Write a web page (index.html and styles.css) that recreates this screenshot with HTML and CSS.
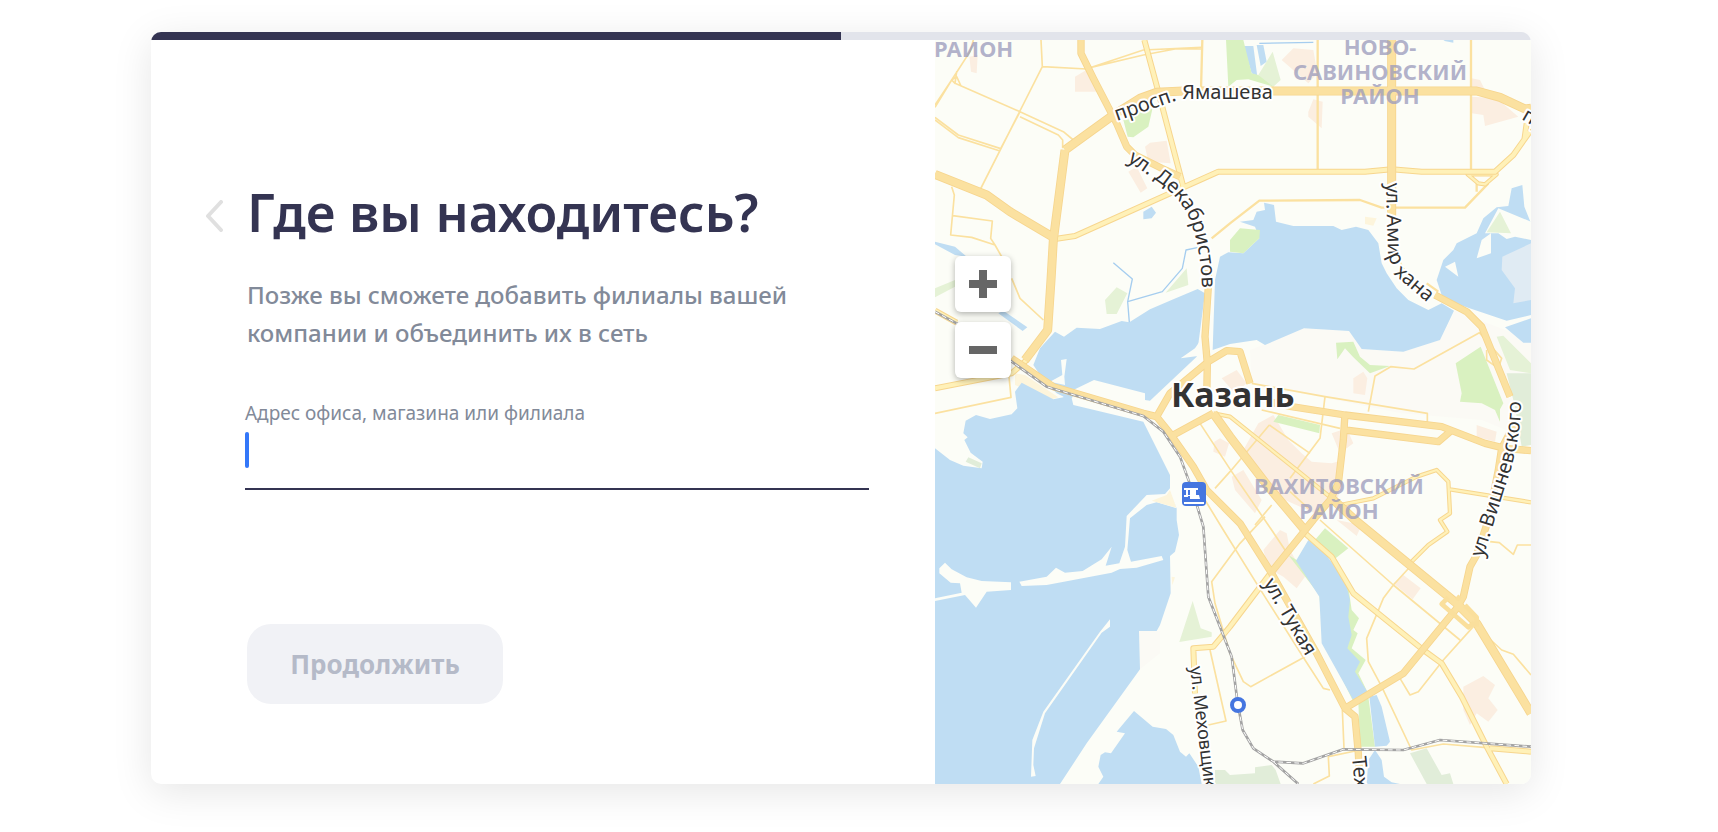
FILE: index.html
```
<!DOCTYPE html>
<html lang="ru">
<head>
    <meta charset="UTF-8">
    <meta name="viewport" content="width=device-width, initial-scale=1.0">
    <title>Где вы находитесь?</title>
    <link rel="stylesheet" href="styles.css">
</head>
<body>
    <main class="card">
        <div class="progress">
            <div class="progress-bar" style="width: 50%"></div>
        </div>
        <div class="content">
            <form class="form">
                <div class="header">
                    <button class="back" type="button" aria-label="Назад">
                        <svg width="18" height="32" viewBox="0 0 18 32"><path d="M16 2 L3 16 L16 30"/></svg>
                    </button>
                    <h1>Где вы находитесь?</h1>
                </div>
                <p class="hint">Позже вы сможете добавить филиалы вашей компании и объединить их в сеть</p>
                <div class="field">
                    <label for="address">Адрес офиса, магазина или филиала</label>
                    <div class="input-row">
                        <input type="text" id="address" name="address" autocomplete="off">
                        <span class="caret"></span>
                    </div>
                </div>
                <button class="submit" type="submit" disabled>Продолжить</button>
            </form>

            <div class="map">
                <svg class="map-canvas" viewBox="0 0 596 744" preserveAspectRatio="xMidYMid slice">
                    <defs>
                        <path id="roads-wide" d="M390 330 L535 225 L615 175 L665 157 L745 153 H1625 L1695 172 L1770 207 L1788 205 M390 330 L355 600 L348 720 L338 870 L270 960 M0 403 L155 465 L225 515 L355 592 M1370 0 V530 M835 1120 L885 1190 L1000 1340 L1105 1465 M1185 1370 L1260 1440 L1565 1690 L1625 1750 L1788 2020"/>
                        <path id="roads-main" d="M438 0 V40 L475 115 L545 250 L575 320 L600 345 L680 385 L735 410 M820 690 V740 L810 890 L817 970 L815 1080 M230 955 L355 1040 L625 1120 L665 1130 L705 1180 L775 1280 L815 1350 L915 1450 L1010 1600 L1145 1840 L1230 2005 L1260 2030 L1270 2140 L1275 2232 M665 1130 L705 1060 L820 965 L875 932 L915 935 L945 1030 M1000 1085 L1070 1100 L1230 1125 L1520 1160 L1650 1210 L1710 1225 L1788 1232 M715 1185 L835 1120 M1135 1440 L1010 1595 M1230 1120 L1225 1200 L1210 1330 L1185 1380 L1105 1475 M1230 2005 L1405 1900 L1565 1705 L1585 1670 L1605 1580 L1625 1545 L1660 1440 L1690 1290 L1700 1225 L1740 1150 M1500 765 L1595 815 L1640 860 L1725 1070 M1230 1170 L1510 1205 L1545 1175"/>
                        <path id="roads-yellow" d="M628 0 L670 155 L745 440 M360 597 L420 588 L850 395 H1290 L1370 388 L1460 395 H1680 L1735 345 L1788 270 M1775 250 L1768 300 M0 1045 L230 1000 L275 960 M0 812 L65 848 M1105 1475 L1190 1550 L1255 1660 L1465 1830 L1520 1870 L1580 1970 L1655 2120 L1715 2232 M1010 1595 L885 1760 L835 1820 L775 1825 L780 1960 M1665 2125 L1788 2135"/>
                        <path id="roads-small" d="M835 1120 L885 1130 L1085 1290 L1215 1395 L1315 1375 L1445 1310 L1505 1290 L1540 1325 L1545 1420 L1515 1440 L1537 1475 L1480 1515 L1425 1570 M1545 1348 L1788 1387 M1598 403 H1685 L1650 433 L1630 430 Z"/>
                        <path id="rails" d="M0 815 L65 850 L230 965 L335 1040 L625 1128 L685 1175 L735 1250 L775 1360 L805 1460 L820 1670 L890 1850 L908 1990 L923 2070 L955 2125 L1015 2165 L1105 2170 L1225 2128 L1405 2130 L1515 2100 L1788 2120 M1015 2165 L1090 2232"/>

                        <path id="way-yamasheva" d="M182 81 L237 62 Q244 59 252 59 H360"/>
                        <path id="way-dekabristov" d="M192 121 L222 141 Q246 158 255 180 Q268 215 267 260"/>
                        <path id="way-amirkhana" d="M451 143 L453 216 L459 229 M461 236 L508 276"/>
                        <path id="way-vishnevskogo" d="M548 518 L569 450 Q593 385 583 330"/>
                        <path id="way-tukaya" d="M328 543 L384 639"/>
                        <path id="way-mehovshikov" d="M255 627 L275 794"/>
                        <path id="way-teh" d="M417 717 L424 790"/>
                        <path id="way-edge" d="M586 79 L640 110"/>
                    </defs>

                    <!-- ground, water and roads use a three times finer grid -->
                    <svg width="596" height="744" viewBox="0 0 1788 2232">
                        <rect class="land" width="1788" height="2232"/>

                        <g class="district">
                            <path d="M945 930 L1107 865 L1242 873 L1280 927 L1405 935 L1515 900 L1560 812 L1788 900 V1200 L1640 1140 L1400 1120 L950 1030 Z"/>
                            <path d="M612 1773 H675 V1840 L615 1888 Z"/>
                        </g>

                        <g class="urban">
                            <path d="M420 110 L470 80 L500 155 H420 Z M630 320 L645 308 L695 302 L707 370 L640 365 Z M580 395 L605 380 L637 445 L617 458 Z M103 50 L128 45 L125 100 L108 95 Z"/>
                            <path d="M1040 60 L1075 25 L1135 30 L1147 100 L1120 130 Z M1610 115 L1635 120 L1650 150 L1610 150 Z M1610 170 L1685 175 L1750 230 L1650 258 L1645 225 L1610 220 Z M1120 215 L1135 178 L1163 185 L1160 265 L1120 230 Z"/>
                            <path d="M1255 1015 L1285 995 L1297 1015 L1290 1065 L1255 1060 Z M1625 1155 L1685 1175 L1680 1205 L1625 1190 Z M860 1015 L905 990 L935 1030 L900 1060 Z"/>
                            <path d="M925 1230 L970 1150 L1015 1125 L1060 1200 L1100 1240 L1130 1265 L1190 1270 L1225 1260 L1210 1370 L1140 1420 L1050 1380 L960 1290 Z M1190 1180 L1235 1165 L1255 1210 L1215 1240 Z M838 1205 L855 1195 L882 1210 L870 1250 L835 1235 Z M890 1310 L925 1290 L980 1380 L960 1420 L900 1350 Z"/>
                            <path d="M985 1530 L1035 1470 L1055 1480 L1065 1530 L1110 1610 L1085 1645 L1045 1610 L1000 1585 Z M1375 1630 L1405 1605 L1457 1645 L1433 1678 Z M1205 1440 L1280 1455 L1265 1488 Z"/>
                            <path d="M1585 1940 L1645 1908 L1680 1935 L1660 1975 L1688 2010 L1660 2045 L1625 2020 L1605 2055 L1585 2010 Z"/>
                        </g>
                        <path class="sand" d="M240 1000 L270 1005 L370 1072 L350 1078 L240 1035 Z M1290 530 L1325 535 L1315 557 L1290 552 Z"/>

                        <g class="water">
                            <!-- upper lake -->
                            <path d="M295 975 L315 925 L360 875 L387 890 L425 863 L495 867 L560 843 L583 847 L645 808 L715 778 L788 747 L810 760 L785 950 L645 1082 L630 1080 V1060 L477 1020 L415 1050 L405 1080 L365 1060 L325 1020 Z"/>
                            <path d="M840 720 L855 650 L880 637 L925 640 L973 595 L960 560 L915 545 L955 540 L965 515 L990 510 L987 488 L1017 495 L1023 545 L1075 558 H1195 L1220 570 L1263 560 L1300 570 L1330 610 L1340 670 L1355 700 L1385 745 L1420 780 L1480 810 L1520 790 L1557 812 L1515 900 L1405 935 L1280 927 L1242 873 L1107 865 L990 915 L965 900 L885 912 L833 930 Z"/>
                            <!-- east -->
                            <path d="M1505 720 L1525 660 L1555 630 L1565 610 L1625 580 L1645 535 L1685 502 L1720 498 L1730 445 L1762 435 L1768 500 L1788 550 V825 L1715 842 L1575 795 L1520 765 Z M1710 862 L1788 835 V908 H1765 Z"/>
                            <!-- big lake -->
                            <path d="M0 1225 L45 1260 L85 1277 L140 1285 L143 1265 L107 1238 L88 1200 L98 1192 L85 1180 L92 1142 L123 1125 L165 1137 L230 1123 L247 1105 L240 1055 L260 1028 L355 1078 L385 1072 L395 1040 L420 1060 L410 1075 L415 1095 L625 1145 L705 1305 V1355 L725 1405 V1440 L732 1485 L720 1535 L705 1548 L707 1660 L675 1755 L665 1773 H612 L615 1888 L455 2110 L375 2232 H0 Z"/>
                            <path d="M490 2232 L505 2210 L490 2180 L497 2145 L510 2137 L528 2140 L570 2080 L545 2075 L597 2013 L653 2060 L693 2067 L715 2085 L735 2135 L753 2150 L763 2140 L790 2180 L800 2232 Z"/>
                            <path d="M925 18 H955 L967 110 L950 100 Z M965 15 H985 L995 65 L977 78 Z M625 515 L650 500 L663 518 L650 535 L625 538 Z M190 820 L205 812 L277 862 L263 873 Z M0 605 L60 620 L95 650 L60 645 L0 613 Z M1525 2 L1530 0 H1555 V8 Z"/>
                        </g>
                        <path class="stream" d="M535 668 L592 717 L578 785 L583 847 M578 785 L682 755 L742 685 L753 630 L790 622 M973 10 L1135 7"/>

                        <g class="land">
                            <path d="M253 1625 L335 1610 L363 1583 L390 1598 L443 1593 L500 1558 L530 1520 L512 1577 L553 1570 L570 1520 L575 1428 L635 1365 L690 1362 L705 1345 L725 1405 L665 1387 L635 1395 L585 1435 L577 1530 L588 1565 L680 1548 L685 1560 L605 1583 L555 1587 L530 1598 L335 1635 L260 1638 Z"/>
                            <path d="M13 1585 L30 1568 L50 1588 L95 1612 L140 1623 L228 1627 V1650 L155 1655 L123 1703 L90 1665 L0 1683 V1675 L80 1658 L75 1630 L47 1628 L13 1600 Z"/>
                            <path d="M525 1738 V1760 L500 1778 L330 2020 L297 2125 L295 2175 L302 2208 L288 2210 L292 2100 L325 2015 L495 1775 Z"/>
                            <path d="M378 960 L395 957 L388 1010 L390 1035 L345 1025 L382 1005 Z M737 955 L780 925 L797 900 L812 945 Z"/>
                            <path d="M1625 655 L1640 600 L1668 580 L1668 640 Z M1530 680 L1560 665 L1570 710 Z M1650 580 L1690 505 L1788 545 V600 L1740 590 L1715 597 L1690 580 Z"/>
                        </g>
                        <path class="wet" d="M1702 650 L1788 610 V780 L1735 790 L1740 745 L1700 690 Z"/>
                        <path class="sand" d="M650 1382 L695 1365 L705 1350 L724 1403 Z M710 1610 L720 1612 L712 1635 Z"/>

                        <g class="park">
                            <path d="M873 0 H925 L950 100 L970 105 L1020 125 L1015 140 L940 118 L905 120 L880 140 Z M885 600 L915 565 L975 570 L973 595 L925 640 L885 635 Z M565 240 L655 195 L640 260 L595 292 L578 290 Z"/>
                            <path d="M1562 970 L1637 920 L1705 1090 L1695 1108 L1695 1145 L1680 1110 L1640 1090 L1575 1085 L1580 1060 Z M1203 908 L1255 905 L1275 950 L1305 975 L1365 978 L1305 1000 L1255 952 L1230 925 L1207 958 Z M1030 1125 L1155 1155 L1153 1180 L1015 1145 Z"/>
                            <path d="M1170 1465 L1240 1525 L1195 1560 L1140 1500 Z M1060 1545 L1153 1665 L1165 1800 L1255 1985 L1297 1955 L1270 1900 L1292 1860 L1250 1825 L1268 1780 L1255 1770 L1272 1735 L1250 1710 L1240 1640 L1170 1640 L1085 1560 Z M1270 1985 L1300 1970 L1320 2120 H1275 Z"/>
                        </g>
                        <g class="grass">
                            <path d="M970 105 L1013 35 L1037 120 L1015 140 Z M510 780 L545 742 L577 760 L545 822 H515 Z M692 758 L755 685 L760 735 Z M0 745 L60 720 V740 L0 772 Z M1655 577 L1695 515 L1728 580 Z M773 1683 L797 1765 L830 1777 V1790 L733 1806 Z M1685 890 L1705 887 L1788 970 V1000 L1725 990 Z"/>
                        </g>
                        <path class="grove" d="M92 1265 L100 1252 L140 1270 L135 1285 Z M840 2190 H870 L885 2205 L960 2200 V2182 L1010 2175 L1022 2190 L1037 2232 H840 Z M1425 2140 L1475 2125 L1520 2205 L1545 2200 L1555 2232 H1475 Z M1715 1000 L1788 1000 V1215 L1760 1220 L1740 1100 Z"/>
                        <g class="water">
                            <path d="M1120 1500 L1083 1562 L1153 1670 L1160 1810 L1255 1980 L1297 1955 L1260 1895 L1275 1865 L1237 1825 L1250 1785 L1240 1730 L1245 1680 L1235 1640 L1200 1580 L1170 1540 Z M1303 1970 L1325 1965 L1340 2000 L1365 2105 L1355 2117 L1320 2120 Z M1320 2130 L1340 2160 L1347 2210 L1370 2227 L1395 2232 H1295 L1300 2160 Z"/>
                        </g>

                        <g class="street">
                            <path d="M115 0 L105 35 L50 120 L0 195 M50 120 L0 202 M318 0 L322 80 L135 450 M322 80 L455 87 M465 83 L625 30 L800 22 M465 83 L625 45 L720 27 H800 M60 130 L255 215 L385 275 L415 300 M255 230 L370 285 L383 300 V325 M255 215 L195 330 M65 95 L60 130 L50 120 L65 110 L78 138 M0 232 L70 285 L195 325 M0 240 L70 293 L195 333"/>
                            <path d="M50 440 L58 465 L47 585 L110 592 L180 615 L200 650 M53 527 L172 543 L167 595 L180 615 M230 715 L255 775 L325 840 M0 1120 L228 1072 L222 1010"/>
                            <path d="M950 1030 L1170 1070 L1477 1120 V1145 M1300 1115 L1320 1008 L1367 980 L1437 987 L1633 878 L1700 955 L1690 985 L1655 960 V930 M1170 1070 L1155 1195 L1065 1315 M980 1110 L1215 1165 M1003 1155 L1125 1240 M1003 1155 L885 1295 L840 1345 M795 1150 L890 1295 L1010 1470 L1060 1545"/>
                            <path d="M810 1380 L865 1470 L980 1655 L1110 1860 L1165 1945 L1185 1950 M990 1430 L915 1510 L830 1625 L840 1690 L885 1840 L925 1925 L947 1940 L1110 1850 M825 1830 L873 2043 L820 2055"/>
                            <path d="M1065 1355 L1120 1405 M1010 1395 L960 1455 M1155 1440 L1375 1635 L1575 1800 M1430 1575 L1375 1635 L1345 1675 L1295 1795 L1300 1865 L1340 1940 L1430 2130 L1525 2112 L1655 2123 M1395 1915 L1425 1965 L1450 1955 L1525 1860 L1615 1760 M1222 2010 L1227 2125 M1275 2130 L1180 2150 L1183 2208 L1135 2232 M1635 1770 L1700 1830 L1735 1843 L1788 1905 M1665 1505 L1693 1508 L1735 1543 L1747 1515 H1788"/>
                        </g>
                        <path class="street-wide" d="M802 0 L798 150 M1148 0 V390 M1608 0 V390 M830 595 L885 550 L973 482 L1275 480 L1340 503 H1590 L1660 430 M1625 455 V430"/>
                        <path class="street-wide" d="M1385 640 L1400 680 L1440 730 M1475 730 L1510 755"/>

                        <use class="small-edge" href="#roads-small"/>
                        <use class="small-fill" href="#roads-small"/>
                        <use class="yellow-edge" href="#roads-yellow"/>
                        <use class="yellow-fill" href="#roads-yellow"/>
                        <use class="main-edge" href="#roads-main"/>
                        <use class="wide-edge" href="#roads-wide"/>
                        <use class="main-fill" href="#roads-main"/>
                        <use class="wide-fill" href="#roads-wide"/>
                        <path class="ramp" d="M1540 1672 L1520 1692 L1545 1714 L1600 1762 L1618 1748 M1565 1680 L1575 1668 M1590 1695 L1625 1732 V1760"/>

                        <use class="rail" href="#rails"/>
                        <use class="rail-gap" href="#rails"/>
                    </svg>

                    <g class="area">
                        <text x="-1" y="17">РАЙОН</text>
                        <text class="centered" x="445" y="15">НОВО-</text>
                        <text class="centered" x="445" y="40">САВИНОВСКИЙ</text>
                        <text class="centered" x="445" y="64">РАЙОН</text>
                        <text class="centered" x="404" y="454">ВАХИТОВСКИЙ</text>
                        <text class="centered" x="404" y="479">РАЙОН</text>
                    </g>

                    <g class="way">
                        <text><textPath href="#way-yamasheva">просп. Ямашева</textPath></text>
                        <text><textPath href="#way-dekabristov">ул. Декабристов</textPath></text>
                        <text><textPath href="#way-amirkhana">ул. Амирхана</textPath></text>
                        <text><textPath href="#way-vishnevskogo">ул. Вишневского</textPath></text>
                        <text><textPath href="#way-tukaya">ул. Тукая</textPath></text>
                        <text class="minor"><textPath href="#way-mehovshikov">ул. Меховщиков</textPath></text>
                        <text><textPath href="#way-teh">Тех</textPath></text>
                        <text><textPath href="#way-edge">пр</textPath></text>
                    </g>

                    <text class="city" x="236" y="367">Казань</text>

                    <g class="station">
                        <rect x="247" y="442" width="24" height="24" rx="4"/>
                        <path d="M249 448 h14 v2 h-2 v5 h3 l1 4 h-10 v-3 h-2 v1 h-4 v-2 h2 v-5 h-2 Z M249 462 h20 v2 h-20 Z"/>
                        <path class="station-gap" d="M253 450 h2 v5 h-2 Z"/>
                    </g>
                    <circle class="stop" cx="303" cy="665" r="6"/>
                </svg>

                <div class="zoom">
                    <button type="button" aria-label="Приблизить">
                        <svg width="28" height="28" viewBox="0 0 28 28"><path d="M10 0 h8 v10 h10 v8 h-10 v10 h-8 v-10 h-10 v-8 h10 Z"/></svg>
                    </button>
                    <button type="button" aria-label="Отдалить">
                        <svg width="28" height="28" viewBox="0 0 28 28"><path d="M0 10 h28 v8 h-28 Z"/></svg>
                    </button>
                </div>
            </div>
        </div>
    </main>
</body>
</html>
```
FILE: styles.css
```
* {
    box-sizing: border-box;
}

body {
    margin: 0;
    background-color: #fff;
    font-family: 'Noto Sans', 'Open Sans', sans-serif;
    color: #343452;
}

.card {
    margin: 32px 187px 48px 151px;
    background-color: #fff;
    border-radius: 10px;
    box-shadow: 0 8px 40px rgba(0, 0, 0, 0.1);
    overflow: hidden;
}

.progress {
    height: 8px;
    background-color: #e2e4eb;
}

.progress-bar {
    height: 100%;
    background-color: #343452;
}

.content {
    display: grid;
    grid-template-columns: 784fr 596fr;
}

/* form */

.form {
    display: flex;
    flex-direction: column;
    padding: 140px 66px 80px 96px;
}

.header {
    display: flex;
    align-items: center;
    gap: 24px;
    margin-left: -42px;
}

h1 {
    margin: 0;
    font-size: 52px;
    line-height: 64px;
    font-weight: 600;
    white-space: nowrap;
}

button {
    border: none;
    font-family: inherit;
    cursor: pointer;
}

.back {
    padding: 8px 0 0;
    background: none;
}

.back svg {
    display: block;
    fill: none;
    stroke: #e0e0e0;
    stroke-width: 4;
    stroke-linecap: round;
    stroke-linejoin: round;
}

.hint {
    margin: 32px 0 47px;
    font-size: 24px;
    line-height: 38px;
    font-weight: 500;
    color: #828a99;
}

.field {
    margin: 0 0 134px -2px;
}

label {
    display: block;
    font-size: 19px;
    line-height: 28px;
    color: #828a99;
}

.input-row {
    position: relative;
}

.field input {
    display: block;
    width: 100%;
    height: 63px;
    padding: 0 0 16px;
    border: none;
    border-bottom: 2px solid #343452;
    outline: none;
    background: none;
    font-family: inherit;
    font-size: 26px;
    color: #343452;
    caret-color: transparent;
}

.caret {
    position: absolute;
    top: 5px;
    left: 0;
    width: 4px;
    height: 36px;
    border-radius: 2px;
    background-color: #3377f9;
}

.submit {
    align-self: flex-start;
    width: 256px;
    height: 80px;
    border-radius: 24px;
    background-color: #f1f2f6;
    font-size: 26px;
    font-weight: 700;
    color: #b5bac8;
}

/* map */

.map {
    position: relative;
    contain: size;
    overflow: hidden;
}

.map-canvas {
    display: block;
    width: 100%;
    height: 100%;
}

.land {
    fill: #fcfdf7;
}

.district {
    fill: #fbfaf5;
}

.urban {
    fill: #fbeee1;
}

.sand {
    fill: #fdf5dc;
}

.water {
    fill: #bfddf3;
}

.wet {
    fill: #e0ebf3;
}

.park {
    fill: #d9f1c0;
}

.grass {
    fill: #e5f2d6;
}

.grove {
    fill: #e1edd9;
}

.stream,
.street,
.street-wide,
.ramp,
.map-canvas use {
    fill: none;
    stroke-linejoin: round;
}

.stream {
    stroke: #a5cdef;
    stroke-width: 4;
}

.street {
    stroke: #fbe1a0;
    stroke-width: 5;
}

.street-wide {
    stroke: #fbe1a0;
    stroke-width: 7;
}

.ramp {
    stroke: #fadf9c;
    stroke-width: 14;
}

.small-edge {
    stroke: #f7d68e;
    stroke-width: 13;
}

.small-fill {
    stroke: #fff1b8;
    stroke-width: 7;
}

.yellow-edge {
    stroke: #f7d68e;
    stroke-width: 18;
}

.yellow-fill {
    stroke: #fff1b8;
    stroke-width: 12;
}

.main-edge {
    stroke: #f6d58e;
    stroke-width: 22;
}

.main-fill {
    stroke: #fbe1a0;
    stroke-width: 17;
}

.wide-edge {
    stroke: #f6d58e;
    stroke-width: 27;
}

.wide-fill {
    stroke: #fbe1a0;
    stroke-width: 22;
}

.rail {
    stroke: #a3a3a3;
    stroke-width: 8;
}

.rail-gap {
    stroke: #fff;
    stroke-width: 3;
    stroke-dasharray: 14 10;
}

.area {
    font-size: 22px;
    font-weight: 700;
    fill: #9a9abb;
    fill-opacity: 0.75;
}

.centered {
    text-anchor: middle;
}

.way,
.city {
    fill: #333;
    stroke: #fff;
    stroke-width: 4px;
    stroke-linejoin: round;
    paint-order: stroke;
}

.way {
    font-size: 20px;
}

.minor {
    font-size: 18px;
}

.city {
    font-size: 34px;
    font-weight: 700;
}

.station {
    fill: #fff;
}

.station rect,
.station-gap {
    fill: #4576e0;
}

.stop {
    fill: #fff;
    stroke: #4576e0;
    stroke-width: 4;
}

.zoom {
    position: absolute;
    top: 29%;
    left: 20px;
    display: flex;
    flex-direction: column;
    gap: 10px;
}

.zoom button {
    display: flex;
    align-items: center;
    justify-content: center;
    width: 56px;
    height: 56px;
    padding: 0;
    border-radius: 6px;
    background-color: #fff;
    box-shadow: 0 2px 6px rgba(0, 0, 0, 0.3);
}

.zoom svg {
    fill: #666;
}
```
